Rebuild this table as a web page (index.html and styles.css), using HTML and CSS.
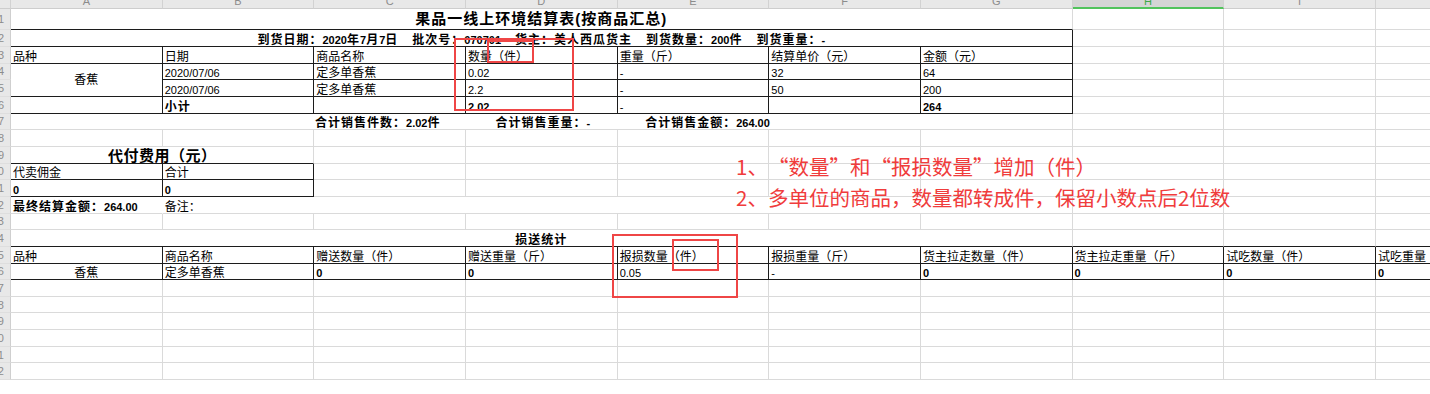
FILE: index.html
```html
<!DOCTYPE html>
<html lang="zh-CN">
<head>
<meta charset="utf-8">
<title>果品一线上环境结算表</title>
<link rel="stylesheet" href="styles.css">
</head>
<body>
<div class="page">
  <div class="sheet">
    <!-- column headers -->
    <div class="corner"></div>
    <div class="ch"><span>A</span></div>
    <div class="ch"><span>B</span></div>
    <div class="ch"><span>C</span></div>
    <div class="ch"><span>D</span></div>
    <div class="ch"><span>E</span></div>
    <div class="ch"><span>F</span></div>
    <div class="ch"><span>G</span></div>
    <div class="ch sel"><span>H</span></div>
    <div class="ch"><span>I</span></div>
    <div class="ch"><span>J</span></div>

    <!-- row 1 -->
    <div class="rh"><span>1</span></div>
    <div class="c s7 B ctr mid title">果品一线上环境结算表(按商品汇总)</div>
    <div class="c"></div><div class="c"></div><div class="c"></div>

    <!-- row 2 -->
    <div class="rh"><span>2</span></div>
    <div class="c s7 B R ctr bz info">
      <span>到货日期：<i>2020</i>年<i>7</i>月<i>7</i>日</span>
      <span>批次号：<i>070701</i></span>
      <span>货主：美人西瓜货主</span>
      <span>到货数量：<i>200</i>件</span>
      <span>到货重量：<i>-</i></span>
    </div>
    <div class="c"></div><div class="c"></div><div class="c"></div>

    <!-- row 3 -->
    <div class="rh"><span>3</span></div>
    <div class="c R B">品种</div>
    <div class="c R B">日期</div>
    <div class="c R B">商品名称</div>
    <div class="c R B">数量（件）</div>
    <div class="c R B">重量（斤）</div>
    <div class="c R B">结算单价（元）</div>
    <div class="c R B">金额（元）</div>
    <div class="c"></div><div class="c"></div><div class="c"></div>

    <!-- row 4 -->
    <div class="rh"><span>4</span></div>
    <div class="c R B rows2 ctr mid">香蕉</div>
    <div class="c R B n">2020/07/06</div>
    <div class="c R B">定多单香蕉</div>
    <div class="c R B n">0.02</div>
    <div class="c R B n">-</div>
    <div class="c R B n">32</div>
    <div class="c R B n">64</div>
    <div class="c"></div><div class="c"></div><div class="c"></div>

    <!-- row 5 -->
    <div class="rh"><span>5</span></div>
    <div class="c R B n">2020/07/06</div>
    <div class="c R B">定多单香蕉</div>
    <div class="c R B n">2.2</div>
    <div class="c R B n">-</div>
    <div class="c R B n">50</div>
    <div class="c R B n">200</div>
    <div class="c"></div><div class="c"></div><div class="c"></div>

    <!-- row 6 -->
    <div class="rh"><span>6</span></div>
    <div class="c R B"></div>
    <div class="c R B bz">小计</div>
    <div class="c R B"></div>
    <div class="c R B n b">2.02</div>
    <div class="c R B n">-</div>
    <div class="c R B"></div>
    <div class="c R B n b">264</div>
    <div class="c"></div><div class="c"></div><div class="c"></div>

    <!-- row 7 -->
    <div class="rh"><span>7</span></div>
    <div class="c s7 bz totals">
      <span>合计销售件数：<i>2.02</i>件</span>
      <span>合计销售重量：<i>-</i></span>
      <span>合计销售金额：<i>264.00</i></span>
    </div>
    <div class="c"></div><div class="c"></div><div class="c"></div>

    <!-- row 8 -->
    <div class="rh"><span>8</span></div>
    <div class="c"></div><div class="c"></div><div class="c"></div><div class="c"></div><div class="c"></div>
    <div class="c"></div><div class="c"></div><div class="c"></div><div class="c"></div><div class="c"></div>

    <!-- row 9 -->
    <div class="rh"><span>9</span></div>
    <div class="c s2 B ctr subtitle">代付费用（元）</div>
    <div class="c"></div><div class="c"></div><div class="c"></div><div class="c"></div>
    <div class="c"></div><div class="c"></div><div class="c"></div><div class="c"></div>

    <!-- row 10 -->
    <div class="rh"><span>10</span></div>
    <div class="c R B">代卖佣金</div>
    <div class="c R B">合计</div>
    <div class="c"></div><div class="c"></div><div class="c"></div><div class="c"></div>
    <div class="c"></div><div class="c"></div><div class="c"></div><div class="c"></div>

    <!-- row 11 -->
    <div class="rh"><span>11</span></div>
    <div class="c R B n b">0</div>
    <div class="c R B n b">0</div>
    <div class="c"></div><div class="c"></div><div class="c"></div><div class="c"></div>
    <div class="c"></div><div class="c"></div><div class="c"></div><div class="c"></div>

    <!-- row 12 -->
    <div class="rh"><span>12</span></div>
    <div class="c nr bz">最终结算金额：<i>264.00</i></div>
    <div class="c s6">备注：</div>
    <div class="c"></div><div class="c"></div><div class="c"></div>

    <!-- row 13 -->
    <div class="rh"><span>13</span></div>
    <div class="c"></div><div class="c"></div><div class="c"></div><div class="c"></div><div class="c"></div>
    <div class="c"></div><div class="c"></div><div class="c"></div><div class="c"></div><div class="c"></div>

    <!-- row 14 -->
    <div class="rh"><span>14</span></div>
    <div class="c s7 B ctr bz">损送统计</div>
    <div class="c B"></div><div class="c B"></div><div class="c B"></div>

    <!-- row 15 -->
    <div class="rh"><span>15</span></div>
    <div class="c R B">品种</div>
    <div class="c R B">商品名称</div>
    <div class="c R B">赠送数量（件）</div>
    <div class="c R B">赠送重量（斤）</div>
    <div class="c R B">报损数量（件）</div>
    <div class="c R B">报损重量（斤）</div>
    <div class="c R B">货主拉走数量（件）</div>
    <div class="c R B">货主拉走重量（斤）</div>
    <div class="c R B">试吃数量（件）</div>
    <div class="c R B">试吃重量（斤）</div>

    <!-- row 16 -->
    <div class="rh"><span>16</span></div>
    <div class="c R B ctr">香蕉</div>
    <div class="c R B">定多单香蕉</div>
    <div class="c R B n b">0</div>
    <div class="c R B n b">0</div>
    <div class="c R B n">0.05</div>
    <div class="c R B n">-</div>
    <div class="c R B n b">0</div>
    <div class="c R B n b">0</div>
    <div class="c R B n b">0</div>
    <div class="c R B n b">0</div>

    <!-- rows 17-22 -->
    <div class="rh"><span>17</span></div>
    <div class="c"></div><div class="c"></div><div class="c"></div><div class="c"></div><div class="c"></div>
    <div class="c"></div><div class="c"></div><div class="c"></div><div class="c"></div><div class="c"></div>
    <div class="rh"><span>18</span></div>
    <div class="c"></div><div class="c"></div><div class="c"></div><div class="c"></div><div class="c"></div>
    <div class="c"></div><div class="c"></div><div class="c"></div><div class="c"></div><div class="c"></div>
    <div class="rh"><span>19</span></div>
    <div class="c"></div><div class="c"></div><div class="c"></div><div class="c"></div><div class="c"></div>
    <div class="c"></div><div class="c"></div><div class="c"></div><div class="c"></div><div class="c"></div>
    <div class="rh"><span>20</span></div>
    <div class="c"></div><div class="c"></div><div class="c"></div><div class="c"></div><div class="c"></div>
    <div class="c"></div><div class="c"></div><div class="c"></div><div class="c"></div><div class="c"></div>
    <div class="rh"><span>21</span></div>
    <div class="c"></div><div class="c"></div><div class="c"></div><div class="c"></div><div class="c"></div>
    <div class="c"></div><div class="c"></div><div class="c"></div><div class="c"></div><div class="c"></div>
    <div class="rh"><span>22</span></div>
    <div class="c"></div><div class="c"></div><div class="c"></div><div class="c"></div><div class="c"></div>
    <div class="c"></div><div class="c"></div><div class="c"></div><div class="c"></div><div class="c"></div>
  </div>

  <!-- annotation overlays -->
  <div class="mark m1"></div>
  <div class="mark m2"></div>
  <div class="mark m3"></div>
  <div class="mark m4"></div>
  <div class="note">
    <p>1、<span class="qo">“</span>数量<span class="qc">”</span>和<span class="qo">“</span>报损数量<span class="qc">”</span>增加（件）</p>
    <p>2、多单位的商品，数量都转成件，保留小数点后2位数</p>
  </div>
</div>
</body>
</html>
```

FILE: styles.css
```css
* { box-sizing: border-box; }
html, body { margin: 0; padding: 0; background: #fff; }
body {
  font-family: "Liberation Sans", "Noto Sans CJK SC", sans-serif;
  font-size: 12px;
  color: #000;
}
.page {
  position: relative;
  width: 1430px;
  height: 394px;
  overflow: hidden;
  background: #fff;
}
.sheet {
  display: grid;
  grid-template-columns: 11px repeat(10, 151.667px);
  grid-template-rows: 9px 21.333px repeat(21, 16.667px);
}

/* headers */
.corner, .ch {
  background: #e8e8e8;
  border-right: 1px solid #d2d2d2;
  border-bottom: 1px solid #cdcdcd;
  overflow: hidden;
  color: #8c8c8c;
  font-size: 11px;
  line-height: 11px;
  text-align: center;
}
.ch span { display: block; margin-top: -4px; }
.ch.sel {
  background: #d5d5d5;
  color: #3daa48;
  border-bottom: 2px solid #52c35c;
}
.rh {
  background: #e8e8e8;
  border-right: 1px solid #cfcfcf;
  border-bottom: 1px solid #dedede;
  overflow: hidden;
  color: #8c8c8c;
  font-size: 11px;
  display: flex;
  align-items: center;
  justify-content: flex-end;
  padding-right: 6px;
  white-space: nowrap;
}

/* cells */
.c {
  border-right: 1px solid #dadada;
  border-bottom: 1px solid #dadada;
  display: flex;
  align-items: flex-end;
  padding: 0 2px;
  line-height: 12px;
  white-space: nowrap;
  min-width: 0;
  background: #fff;
}
.R { border-right-color: #1c1c1c; }
.B { border-bottom-color: #1c1c1c; }
.nr { border-right-color: transparent; }
.ctr { justify-content: center; }
.mid { align-items: center; }
.rows2 { grid-row: span 2; }
.s2 { grid-column: span 2; }
.s6 { grid-column: span 6; }
.s7 { grid-column: span 7; }

.n { font-size: 11px; }
.b { font-weight: bold; }
.bz { font-weight: bold; letter-spacing: 1px; }
.c i { font-style: normal; font-size: 11px; letter-spacing: 0; }

.title {
  font-size: 15px;
  font-weight: bold;
  letter-spacing: 1px;
  line-height: 16px;
}
.info { gap: 14px; }
.totals { padding-left: 304px; gap: 55px; }
.subtitle {
  font-size: 15px;
  font-weight: bold;
  letter-spacing: 0.5px;
  line-height: 15px;
}

/* red annotation boxes */
.mark {
  position: absolute;
  border: 2px solid #ef4646;
}
.m1 { left: 454px; top: 38px; width: 120px; height: 73px; }
.m2 { left: 487px; top: 40px; width: 47px; height: 23px; }
.m3 { left: 612px; top: 234px; width: 126px; height: 64px; }
.m4 { left: 672px; top: 239px; width: 47px; height: 32px; }

.note {
  position: absolute;
  left: 736px;
  top: 151px;
  color: #f03c3c;
  font-family: "Noto Sans CJK SC", sans-serif;
  font-size: 20.5px;
  line-height: 31px;
  white-space: nowrap;
}
.note p { margin: 0; }
.note .qo, .note .qc { display: inline-block; width: 1em; }
.note .qo { text-align: right; }
.note .qc { text-align: left; }
```
